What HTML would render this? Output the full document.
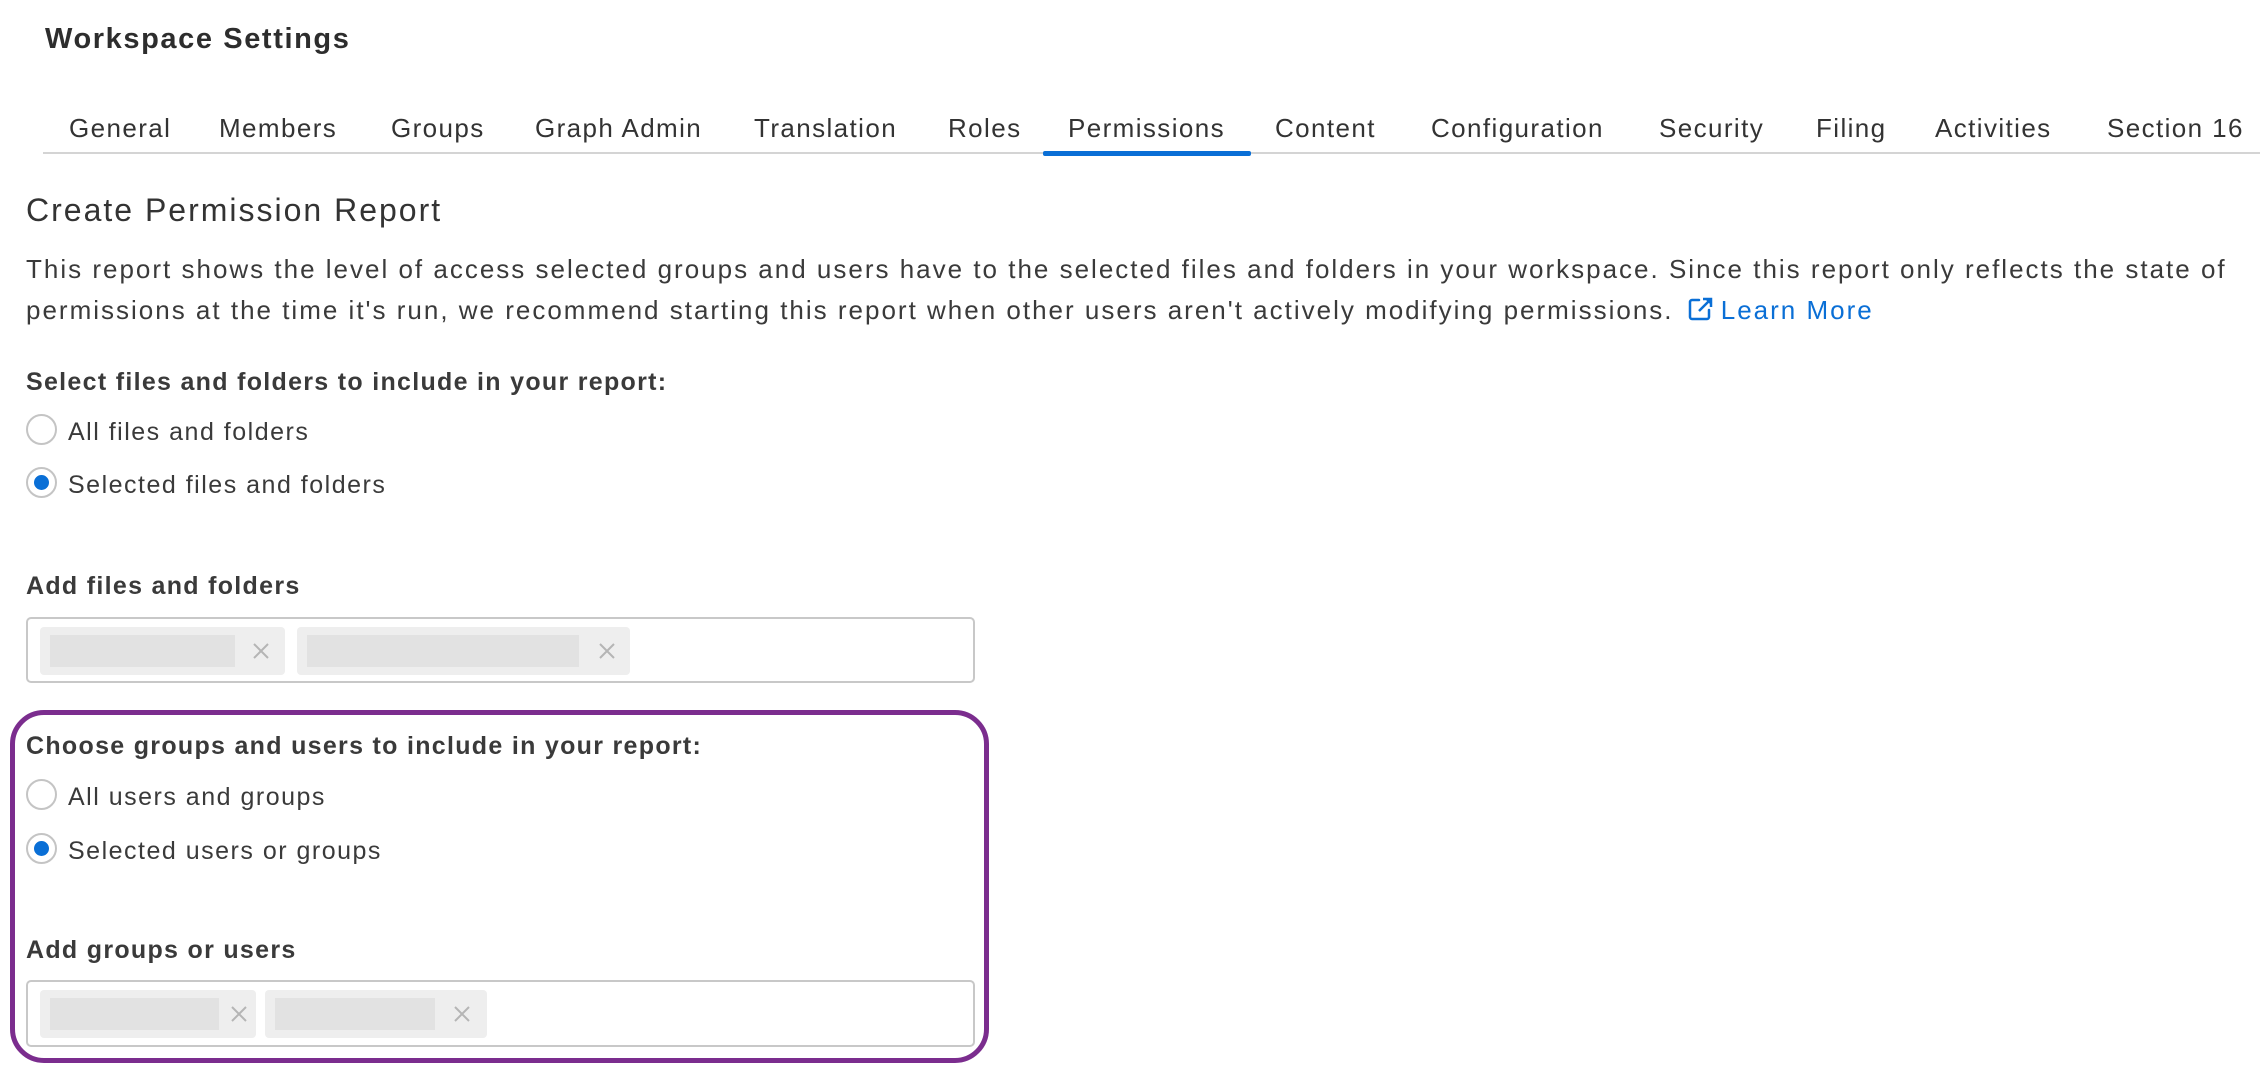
<!DOCTYPE html>
<html><head><meta charset="utf-8"><style>
*{margin:0;padding:0;box-sizing:border-box}
body{width:2260px;height:1074px;background:#fff;font-family:"Liberation Sans",sans-serif;color:#3a3a3a;position:relative;overflow:hidden}
.a{position:absolute;white-space:nowrap;line-height:1}
.tab{position:absolute;top:113px;font-size:26px;color:#333;letter-spacing:1.4px}
.b{font-weight:bold;font-size:25px;color:#3a3a3a;letter-spacing:1.3px}
.r{position:absolute;width:31px;height:31px;border:2px solid #c4c4c4;border-radius:50%;background:#fff}
.r.on::after{content:"";position:absolute;left:6px;top:6px;width:15px;height:15px;border-radius:50%;background:#0a6fd6}
.lbl{font-size:25px;color:#3a3a3a;letter-spacing:1.5px}
.box{position:absolute;border:2px solid #c8c8c8;border-radius:5px;background:#fff}
.chip{position:absolute;background:#eeeeee;border-radius:4px}
.chip i{position:absolute;left:10px;top:8px;bottom:8px;background:#e2e2e2}
.chip svg{position:absolute;top:50%;margin-top:-9px}
</style></head><body>
<div class="a" style="left:45px;top:25px;font-size:29px;font-weight:bold;color:#2d2d2d;letter-spacing:1.6px">Workspace Settings</div>

<div class="tab" style="left:69px">General</div>
<div class="tab" style="left:219px">Members</div>
<div class="tab" style="left:391px">Groups</div>
<div class="tab" style="left:535px">Graph Admin</div>
<div class="tab" style="left:754px">Translation</div>
<div class="tab" style="left:948px">Roles</div>
<div class="tab" style="left:1068px">Permissions</div>
<div class="tab" style="left:1275px">Content</div>
<div class="tab" style="left:1431px">Configuration</div>
<div class="tab" style="left:1659px">Security</div>
<div class="tab" style="left:1816px">Filing</div>
<div class="tab" style="left:1935px">Activities</div>
<div class="tab" style="left:2107px">Section 16</div>
<div style="position:absolute;left:43px;top:152px;width:2217px;height:2px;background:#d4d4d4"></div>
<div style="position:absolute;left:1043px;top:151px;width:208px;height:5px;background:#0a6fd6;border-radius:2px"></div>

<div class="a" style="left:26px;top:194px;font-size:32px;color:#333;letter-spacing:2px">Create Permission Report</div>
<div class="a" style="left:26px;top:249px;font-size:26px;letter-spacing:2px;line-height:41px;white-space:nowrap;width:2234px;color:#3a3a3a">This report shows the level of access selected groups and users have to the selected files and folders in your workspace. Since this report only reflects the state of<br>permissions at the time it's run, we recommend starting this report when other users aren't actively modifying permissions. <svg width="28" height="28" viewBox="0 0 28 28" style="vertical-align:-4px;margin:0 6px 0 4px"><path d="M12 5H5a2 2 0 0 0-2 2v15a2 2 0 0 0 2 2h15a2 2 0 0 0 2-2v-7" fill="none" stroke="#0a6fd6" stroke-width="2.5" stroke-linecap="round"/><path d="M12 16L23 5M16 4h8v8" fill="none" stroke="#0a6fd6" stroke-width="2.5"/><path d="M17 3h8v8z" fill="#0a6fd6"/></svg><span style="color:#0a6fd6">Learn More</span></div>

<div class="a b" style="left:26px;top:370px">Select files and folders to include in your report:</div>
<div class="r" style="left:26px;top:414px"></div>
<div class="a lbl" style="left:68px;top:420px">All files and folders</div>
<div class="r on" style="left:26px;top:467px"></div>
<div class="a lbl" style="left:68px;top:473px">Selected files and folders</div>

<div class="a b" style="left:26px;top:574px">Add files and folders</div>
<div class="box" style="left:26px;top:617px;width:949px;height:66px">
 <div class="chip" style="left:12px;top:8px;width:245px;height:48px"><i style="width:185px"></i><svg style="left:212px" width="18" height="18"><path d="M2 2L16 16M16 2L2 16" stroke="#b5b5b5" stroke-width="2"/></svg></div>
 <div class="chip" style="left:269px;top:8px;width:333px;height:48px"><i style="width:272px"></i><svg style="left:301px" width="18" height="18"><path d="M2 2L16 16M16 2L2 16" stroke="#b5b5b5" stroke-width="2"/></svg></div>
</div>

<div style="position:absolute;left:10px;top:710px;width:979px;height:353px;border:5px solid #7b2d8e;border-radius:34px"></div>
<div class="a b" style="left:26px;top:734px">Choose groups and users to include in your report:</div>
<div class="r" style="left:26px;top:779px"></div>
<div class="a lbl" style="left:68px;top:785px">All users and groups</div>
<div class="r on" style="left:26px;top:833px"></div>
<div class="a lbl" style="left:68px;top:839px">Selected users or groups</div>
<div class="a b" style="left:26px;top:938px">Add groups or users</div>
<div class="box" style="left:26px;top:980px;width:949px;height:67px">
 <div class="chip" style="left:12px;top:8px;width:216px;height:48px"><i style="width:169px"></i><svg style="left:190px" width="18" height="18"><path d="M2 2L16 16M16 2L2 16" stroke="#b5b5b5" stroke-width="2"/></svg></div>
 <div class="chip" style="left:237px;top:8px;width:222px;height:48px"><i style="width:160px"></i><svg style="left:188px" width="18" height="18"><path d="M2 2L16 16M16 2L2 16" stroke="#b5b5b5" stroke-width="2"/></svg></div>
</div>
</body></html>
